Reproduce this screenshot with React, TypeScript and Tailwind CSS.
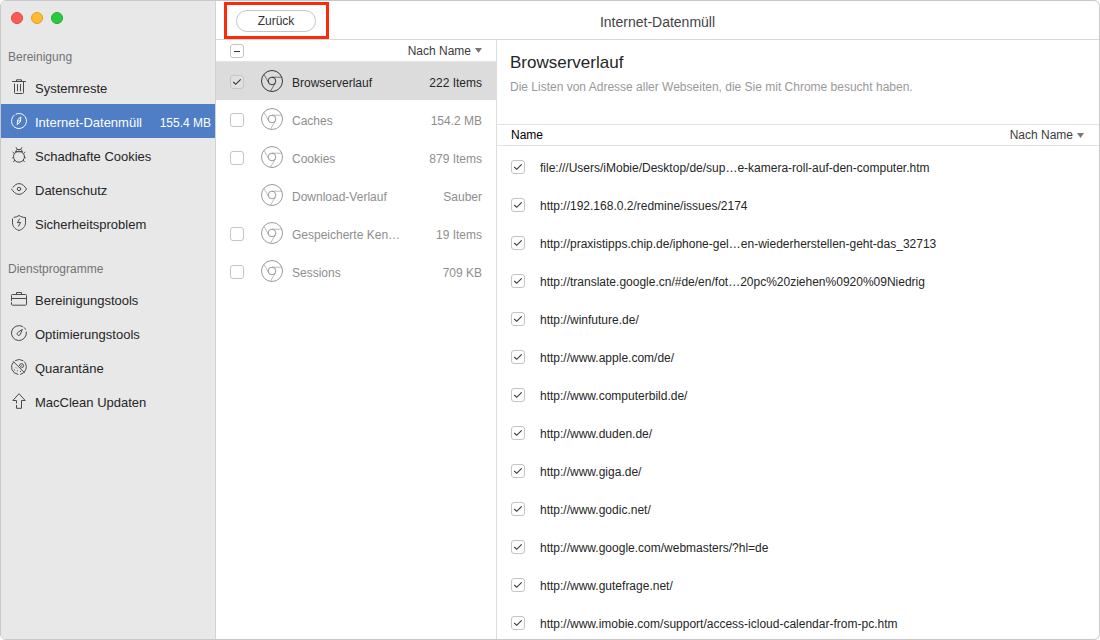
import { useState, type ReactNode } from "react";

type IconProps = { children: ReactNode; className?: string };

function Glyph({ children, className = "" }: IconProps) {
  return (
    <svg
      viewBox="0 0 16 16"
      className={`size-4 shrink-0 ${className}`}
      fill="none"
      stroke="currentColor"
      strokeWidth="1"
      strokeLinecap="round"
      strokeLinejoin="round"
      aria-hidden="true"
    >
      {children}
    </svg>
  );
}

const TrashIcon = () => (
  <Glyph>
    <path d="M1.500 2.500h13M5.500 2.300V.8h5v1.500M3.500 5v8.500c0 .7.400 1 1 1h7c.6 0 1-.3 1-1V3M6.500 5.500v6.300M9.500 5.500v6.300" />
  </Glyph>
);

const CompassIcon = () => (
  <Glyph>
    <path d="M3.200 2.200A7.500 7.500 0 1 0 8 .5c-1.200 0-2.100.2-3 .6" />
    <path d="M9.800 4.300 9.400 8.800 6.200 11.700 6.600 7.200Z" />
    <circle cx="8" cy="8" r=".2" />
  </Glyph>
);

const BugIcon = () => (
  <Glyph>
    <circle cx="8" cy="9.700" r="5.500" />
    <path d="M4.800 4.800C5 3.300 5.700 2.500 6.500 2.500h3c.8 0 1.500.8 1.700 2.300M6.300 2.500 5.200.6M9.700 2.500 10.800.6M4.800 4.800h6.400M3.400 6.500 1.900 5.200M12.600 6.500l1.500-1.300M2.300 10.500l-.7.300M13.700 10.500l.7.300M3.800 13.300 2.600 14.800M12.200 13.300l1.200 1.500" />
  </Glyph>
);

const EyeIcon = () => (
  <Glyph>
    <path d="M2 6.200C3.600 4.200 5.600 2.600 8 2.600c3.400 0 6 3 7.500 5.400C14 10.400 11.400 13.400 8 13.400S2 10.400.5 8" />
    <circle cx="8" cy="8" r="1.700" />
  </Glyph>
);

const ShieldIcon = () => (
  <Glyph>
    <path d="M1.500 4v3.800c0 3.700 2.500 6.300 6.500 7.700 4-1.400 6.500-4 6.500-7.700V2.500C12 2.500 10 1.800 8 .5 6.400 1.600 4.900 2.200 3 2.400" />
    <path d="M8.500 4 6.400 7.700l3.200-.3L7.500 11.200" />
  </Glyph>
);

const CaseIcon = () => (
  <Glyph>
    <path d="M5.500 3.200V1.500h5v1.700M.5 9.500V4.400c0-.6.3-.9.900-.9h13.200c.6 0 .9.300.9.900v3.100M.5 7.500h15v5.700c0 .7-.3 1-.9 1H1.400c-.6 0-.9-.3-.9-1v-1.700" />
  </Glyph>
);

const GaugeIcon = () => (
  <Glyph>
    <path d="M11.500 1.400A7.500 7.500 0 1 0 15.400 7M13.200 2.600a7.500 7.500 0 0 1 1.300 1.700" />
    <path d="M11.200 4.800 9.400 9.200a1.700 1.700 0 1 1-2.400-2Z" />
  </Glyph>
);

const QuarantineIcon = () => (
  <Glyph>
    <path d="M2.600 2.800a7.500 7.500 0 0 0 4.400 12.600M9.500 15.300A7.500 7.500 0 0 0 13.600 3M12 1.600A7.500 7.500 0 0 0 4.500 1.400M2.600 2.800l10.800 10.800" />
    <path d="M8.400 6.600a2.100 2.100 0 1 1 2.300 2.200M10.500 6.600 8.900 8.400M5.200 8.800l.2.200M6.300 11.800h.2M3.600 10.800v.2M9.500 12.300v.2" />
  </Glyph>
);

const ArrowUpIcon = () => (
  <Glyph>
    <path d="M5.500 10V7.500H1.800L8 .7l6.200 6.800h-3.700v7.800h-5v-3" />
  </Glyph>
);

function ChromeIcon() {
  return (
    <svg
      viewBox="0 0 22 22"
      className="size-[22px] shrink-0"
      fill="none"
      stroke="currentColor"
      aria-hidden="true"
    >
      <circle cx="11" cy="11" r="10.500" strokeWidth=".9" />
      <circle cx="11" cy="11" r="3.800" strokeWidth=".9" />
      <path d="M11 7.200h9.600M7.600 12.700 3 4.400M14.300 13 9.500 21.200" strokeWidth=".6" />
    </svg>
  );
}

type TickBoxProps = {
  label?: string;
  id?: string;
  checked: boolean;
  mixed?: boolean;
  faded?: boolean;
  onChange: () => void;
};

function TickBox({ label, id, checked, mixed = false, faded = false, onChange }: TickBoxProps) {
  return (
    <span className="grid size-3.5 shrink-0">
      <input
        id={id}
        type="checkbox"
        aria-label={label}
        checked={checked}
        onChange={onChange}
        className={`[grid-area:1/1] size-3.5 appearance-none rounded-[3px] border ${
          faded ? "border-[#c6c6c6] bg-[#e0e0e0]" : "border-[#c4c4c4] bg-white"
        }`}
      />
      <svg
        viewBox="0 0 14 14"
        className="pointer-events-none [grid-area:1/1] size-3.5 text-[#333333]"
        fill="none"
        stroke="currentColor"
        strokeWidth="1.100"
        aria-hidden="true"
      >
        {mixed ? <path d="M4 7.500h6" /> : checked ? <path d="M3.300 7 5.700 9.300 10.700 4.400" /> : null}
      </svg>
    </span>
  );
}

function SortMenu({ label }: { label: string }) {
  return (
    <span className="inline-flex items-center gap-1 text-[#3c3c3c]">
      <select
        aria-label={label}
        className="field-sizing-content appearance-none bg-transparent text-xs font-normal leading-4"
      >
        <option>Nach Name</option>
      </select>
      <svg viewBox="0 0 7 5" className="h-[5px] w-[7px] shrink-0 text-[#777777]" aria-hidden="true">
        <path d="M0 0h7L3.500 5Z" fill="currentColor" />
      </svg>
    </span>
  );
}

type NavItem = { name: string; icon: ReactNode; size?: string };

const cleaning: NavItem[] = [
  { name: "Systemreste", icon: <TrashIcon /> },
  { name: "Internet-Datenmüll", icon: <CompassIcon />, size: "155.4 MB" },
  { name: "Schadhafte Cookies", icon: <BugIcon /> },
  { name: "Datenschutz", icon: <EyeIcon /> },
  { name: "Sicherheitsproblem", icon: <ShieldIcon /> },
];

const utilities: NavItem[] = [
  { name: "Bereinigungstools", icon: <CaseIcon /> },
  { name: "Optimierungstools", icon: <GaugeIcon /> },
  { name: "Quarantäne", icon: <QuarantineIcon /> },
  { name: "MacClean Updaten", icon: <ArrowUpIcon /> },
];

function NavGroup({ title, items }: { title: string; items: NavItem[] }) {
  return (
    <section>
      <h2 className="flex h-[42px] items-center pt-4 pl-[7px] text-xs text-[#737373]">{title}</h2>
      <ul>
        {items.map((item) => {
          const active = item.size !== undefined;
          return (
            <li key={item.name}>
              <a
                href="#"
                aria-current={active ? "page" : undefined}
                className={`flex h-[34px] items-center gap-2 pr-1 pl-2.5 text-[13px] whitespace-nowrap ${
                  active ? "bg-[#4f7ec6] text-white" : "text-[#262626]"
                }`}
              >
                <span className={active ? "text-white" : "text-[#4a4a4a]"}>{item.icon}</span>
                <span className="pt-1">{item.name}</span>
                {active && <span className="ml-auto pt-1 text-xs">{item.size}</span>}
              </a>
            </li>
          );
        })}
      </ul>
    </section>
  );
}

const categories = [
  { name: "Browserverlauf", amount: "222 Items" },
  { name: "Caches", amount: "154.2 MB" },
  { name: "Cookies", amount: "879 Items" },
  { name: "Download-Verlauf", amount: "Sauber" },
  { name: "Gespeicherte Ken…", amount: "19 Items" },
  { name: "Sessions", amount: "709 KB" },
];

const addresses = [
  "file:///Users/iMobie/Desktop/de/sup…e-kamera-roll-auf-den-computer.htm",
  "http://192.168.0.2/redmine/issues/2174",
  "http://praxistipps.chip.de/iphone-gel…en-wiederherstellen-geht-das_32713",
  "http://translate.google.cn/#de/en/fot…20pc%20ziehen%0920%09Niedrig",
  "http://winfuture.de/",
  "http://www.apple.com/de/",
  "http://www.computerbild.de/",
  "http://www.duden.de/",
  "http://www.giga.de/",
  "http://www.godic.net/",
  "http://www.google.com/webmasters/?hl=de",
  "http://www.gutefrage.net/",
  "http://www.imobie.com/support/access-icloud-calendar-from-pc.htm",
];

function toggled(list: string[], name: string) {
  return list.includes(name) ? list.filter((n) => n !== name) : [...list, name];
}

export default function App() {
  const [picked, setPicked] = useState<string[]>(["Browserverlauf"]);
  const [marked, setMarked] = useState<string[]>(addresses);
  const some = picked.length > 0;

  return (
    <div className="flex h-screen overflow-hidden rounded-md border border-[#c8c8c8] bg-white font-['Liberation_Sans',Arial,sans-serif] text-xs text-[#262626]">
      <nav className="w-[215px] shrink-0 border-r border-[#d2d2d2] bg-[#e8e8e8]">
        <div className="flex gap-2 px-2.5 pt-[11px] pb-1">
          <button aria-label="Schließen" className="size-3 rounded-full border border-[#e2463f] bg-[#fc5b57]" />
          <button aria-label="Minimieren" className="size-3 rounded-full border border-[#dfa023] bg-[#fdbc2e]" />
          <button aria-label="Vergrößern" className="size-3 rounded-full border border-[#1dad2b] bg-[#28ca41]" />
        </div>
        <NavGroup title="Bereinigung" items={cleaning} />
        <NavGroup title="Dienstprogramme" items={utilities} />
      </nav>

      <div className="flex min-w-0 flex-1 flex-col">
        <header className="grid h-[39px] shrink-0 grid-cols-[1fr_auto_1fr] items-center border-b border-[#d8d8d8] px-5 pt-0.5">
          <div className="relative justify-self-start">
            <button className="flex h-[22px] w-20 items-center justify-center rounded-full border border-[#c6c6c6] bg-white text-xs text-[#333333]">
              Zurück
            </button>
            <span className="pointer-events-none absolute -top-2 -right-[13px] -bottom-[7px] -left-3 border-3 border-[#fb2a0a]" />
          </div>
          <h1 className="pt-0.5 text-sm text-[#444444]">Internet-Datenmüll</h1>
        </header>

        <div className="flex min-h-0 flex-1">
          <section className="w-[281px] shrink-0 border-r border-[#dedede]">
            <div className="flex h-[22px] items-center justify-between border-b border-[#e4e4e4] px-3.5">
              <TickBox
                label="Alle Kategorien"
                checked={some}
                mixed={some}
                onChange={() => setPicked(some ? [] : categories.map((c) => c.name))}
              />
              <SortMenu label="Kategorien sortieren" />
            </div>
            <ul>
              {categories.map((category, index) => {
                const current = index === 0;
                return (
                  <li
                    key={category.name}
                    className={`flex h-[38px] items-center px-3.5 ${
                      current ? "bg-[#dcdcdc] text-[#262626]" : "text-[#8e8e8e]"
                    }`}
                  >
                    <span className="w-[31px] shrink-0 pt-0.5">
                      {category.amount !== "Sauber" && (
                        <TickBox
                          id={`category-${index}`}
                          checked={picked.includes(category.name)}
                          faded={current}
                          onChange={() => setPicked(toggled(picked, category.name))}
                        />
                      )}
                    </span>
                    <ChromeIcon />
                    <label htmlFor={`category-${index}`} className="flex flex-1 justify-between pt-1 pl-[9px]">
                      <span>{category.name}</span>
                      <span>{category.amount}</span>
                    </label>
                  </li>
                );
              })}
            </ul>
          </section>

          <main className="min-w-0 flex-1 overflow-hidden">
            <div className="h-[84px] px-[13px] pt-[9px]">
              <h2 className="text-[17px] leading-7 text-[#262626]">Browserverlauf</h2>
              <p className="text-xs leading-5 text-[#999999]">
                Die Listen von Adresse aller Webseiten, die Sie mit Chrome besucht haben.
              </p>
            </div>
            <table className="w-full border-collapse">
              <thead>
                <tr className="h-[21px] border-y border-[#e2e2e2]">
                  <th scope="col" className="pl-3.5 text-left font-normal text-black">
                    Name
                  </th>
                  <th scope="col" className="pr-[15px] text-right font-normal">
                    <SortMenu label="Adressen sortieren" />
                  </th>
                </tr>
              </thead>
              <tbody className="before:block before:h-0.5">
                {addresses.map((address, index) => (
                  <tr key={address} className="h-[38px]">
                    <td colSpan={2} className="pl-3.5">
                      <span className="flex items-center gap-[15px]">
                        <TickBox
                          id={`address-${index}`}
                          checked={marked.includes(address)}
                          onChange={() => setMarked(toggled(marked, address))}
                        />
                        <label htmlFor={`address-${index}`} className="pt-0.5 whitespace-nowrap">
                          {address}
                        </label>
                      </span>
                    </td>
                  </tr>
                ))}
              </tbody>
            </table>
          </main>
        </div>
      </div>
    </div>
  );
}
